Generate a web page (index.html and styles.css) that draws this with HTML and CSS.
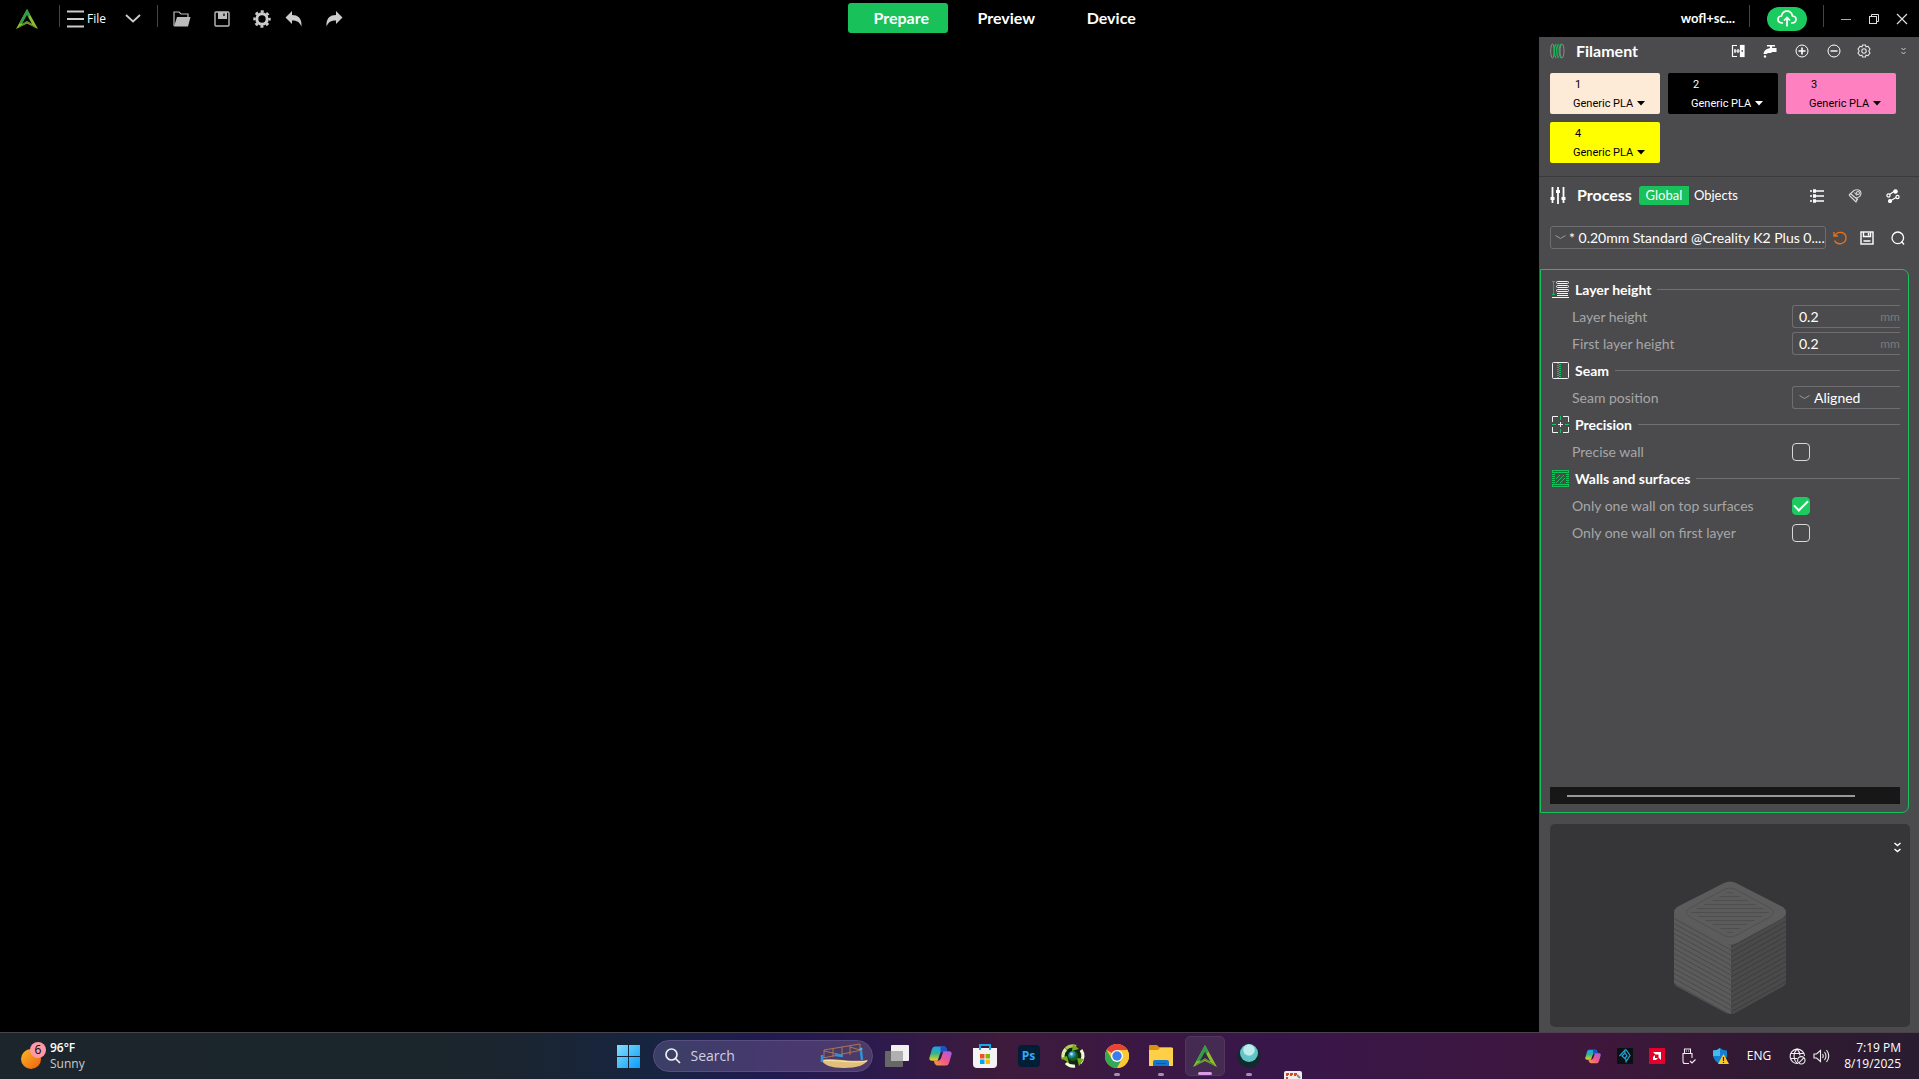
FILE: index.html
```
<!DOCTYPE html>
<html lang="en">
<head>
  <meta charset="UTF-8">
  <title>Creality Print</title>
  <link rel="stylesheet" href="styles.css">
</head>
<body>
  <header class="titlebar">
    <div class="title-left">
      <svg class="logo" width="22" height="20" viewBox="0 0 22 20"><path d="M11 0L22 20L11 14.500L0 20Z" fill="#8fbf2f"/><path d="M11 0L14 6L8 14L3 15Z" fill="#2e9e46"/><path d="M11 6L16 15L11 12L6 15Z" fill="#000"/><path d="M3 18L11 13L19 18" fill="none" stroke="#4a8a28"/></svg>
      <span class="sep"></span>
      <button class="file-btn">
        <svg width="17" height="18" viewBox="0 0 17 18" stroke="#ccc" stroke-width="2"><path d="M0 1.500H17M0 9H17M0 16.500H17"/></svg>
        <span>File</span>
        <svg class="file-arrow" width="16" height="9" viewBox="0 0 16 9" fill="none" stroke="#ccc" stroke-width="1.800"><path d="M1 1L8 7.500L15 1"/></svg>
      </button>
      <span class="sep"></span>
      <div class="tools">
        <button aria-label="Open"><svg width="18" height="16" viewBox="0 0 18 16"><path d="M1 15V1H6L8 3H15V6" fill="none" stroke="#bbb" stroke-width="1.200"/><path d="M4 6H17.500L15 15.500H1Z" fill="#bbb"/></svg></button>
        <button aria-label="Save"><svg width="16" height="16" viewBox="0 0 16 16"><rect x="1" y="1" width="14" height="14" rx="1" fill="none" stroke="#bbb" stroke-width="1.400"/><path d="M4 1H13V8H4Z" fill="#bbb"/><path d="M10 2.500V5" stroke="#222" stroke-width="1.600"/></svg></button>
        <button class="gear" aria-label="Settings"><svg width="18" height="18" viewBox="0 0 18 18"><circle cx="9" cy="9" r="5.200" fill="none" stroke="#ccc" stroke-width="3"/><circle cx="9" cy="9" r="7.500" fill="none" stroke="#ccc" stroke-width="2.400" stroke-dasharray="3 2.890" stroke-dashoffset="1.500"/></svg></button>
        <button aria-label="Undo"><svg width="18" height="18" viewBox="0 0 18 18"><path d="M7 1V5C13 5 17 8 16.500 16.500C14.500 12 12 10.500 7 10.500V14L0.500 7.500Z" fill="#ccc"/></svg></button>
        <button aria-label="Redo"><svg width="18" height="18" viewBox="0 0 18 18"><path d="M11 1V5C5 5 1 8 1.500 16.500C3.500 12 6 10.500 11 10.500V14L17.500 7.500Z" fill="#ccc"/></svg></button>
      </div>
    </div>
    <nav class="tabs">
      <button class="tab active">Prepare</button>
      <button class="tab">Preview</button>
      <button class="tab">Device</button>
    </nav>
    <div class="title-right">
      <button class="account">wofl+sc...</button>
      <span class="sep"></span>
      <button class="cloud" aria-label="Upload"><svg width="20" height="17" viewBox="0 0 20 17" fill="none" stroke="#fff" stroke-width="1.700"><path d="M6 13H5C-0.500 12.500 0 6.500 4.500 6C6 -0.500 14 -0.500 15.500 6C20 6.500 20.500 12.500 15 13H14M10 16.500V8M7 10.500L10 7.500L13 10.500"/></svg></button>
      <span class="sep"></span>
      <div class="window-btns">
        <button aria-label="Minimize"><svg width="12" height="12" viewBox="0 0 12 12" stroke="#aaa"><path d="M1 6.500H11"/></svg></button>
        <button aria-label="Restore"><svg width="12" height="12" viewBox="0 0 12 12" fill="none" stroke="#ddd"><rect x="1.500" y="3.500" width="7" height="7"/><path d="M3.500 3V1.500H10.500V8.500H9"/></svg></button>
        <button aria-label="Close"><svg width="12" height="12" viewBox="0 0 12 12" stroke="#ddd" stroke-width="1.200"><path d="M1 1L11 11M11 1L1 11"/></svg></button>
      </div>
    </div>
  </header>

  <main class="workspace">
    <section class="viewport" aria-label="Build plate"></section>

    <aside class="sidebar">
      <div class="panel-head filament-head">
        <svg width="15" height="16" viewBox="0 0 15 16" fill="none"><g stroke="#8c8c8c"><ellipse cx="2.500" cy="8" rx="1.800" ry="7"/><ellipse cx="12" cy="8" rx="2" ry="7"/></g><path d="M6 1C3.500 4 3.500 12 6 15M8.500 1C6 4 6 12 8.500 15M11 1C8.500 4 8.500 12 11 15" stroke="#17b855" stroke-width="1.300"/></svg>
        <h2>Filament</h2>
        <div class="head-tools">
          <button aria-label="Sync"><svg width="14" height="14" viewBox="0 0 14 14" fill="none" stroke="#fff" stroke-width="1.200"><path d="M6 1.500H1.500V12.500H6M3 7H9M4 5V9M7 5V9"/><rect x="9.500" y="1.500" width="3.500" height="11" fill="#fff"/><path d="M11.200 6V8" stroke="#4b4b4d"/></svg></button>
          <button aria-label="Flush"><svg width="14" height="14" viewBox="0 0 14 14" fill="#fff"><path d="M4 1H12V2.500H9V4H13.500V8H9C8 9.500 7 9 5.500 9C4 9 4 10 3.500 10H0.500C1 7 2.500 5 7 4V2.500H4Z"/><circle cx="2" cy="12.500" r="1.200"/></svg></button>
          <button aria-label="Add"><svg width="14" height="14" viewBox="0 0 14 14" fill="none" stroke="#fff"><circle cx="7" cy="7" r="6"/><path d="M3.500 7H10.500M7 3.500V10.500" stroke-width="1.600"/></svg></button>
          <button aria-label="Remove"><svg width="14" height="14" viewBox="0 0 14 14" fill="none" stroke="#fff"><circle cx="7" cy="7" r="6"/><path d="M3.500 7H10.500" stroke-width="1.400"/></svg></button>
          <button class="narrow" aria-label="Filament settings"><svg width="14" height="14" viewBox="0 0 14 14" fill="none" stroke="#e4e4e4" stroke-width="1.100"><path d="M5.500 1H8.500L9 2.800L11 2.300L13 5L11.800 7L13 9L11 11.700L9 11.200L8.500 13H5.500L5 11.200L3 11.700L1 9L2.200 7L1 5L3 2.300L5 2.800Z"/><circle cx="7" cy="7" r="2.200"/></svg></button>
          <button class="collapse" aria-label="Collapse"><svg width="5" height="8" viewBox="0 0 5 8" fill="none" stroke="#ccc"><path d="M0.500 1L2.500 3L4.500 1M0.500 5L2.500 7L4.500 5"/></svg></button>
        </div>
      </div>

      <div class="filaments">
        <div class="filament peach">
          <label for="filament1">1</label>
          <div class="material"><select id="filament1"><option>Generic PLA</option></select><svg width="8" height="5" viewBox="0 0 8 5"><path d="M0 0H8L4 4.500Z" fill="currentColor"/></svg></div>
        </div>
        <div class="filament black">
          <label for="filament2">2</label>
          <div class="material"><select id="filament2"><option>Generic PLA</option></select><svg width="8" height="5" viewBox="0 0 8 5"><path d="M0 0H8L4 4.500Z" fill="currentColor"/></svg></div>
        </div>
        <div class="filament pink">
          <label for="filament3">3</label>
          <div class="material"><select id="filament3"><option>Generic PLA</option></select><svg width="8" height="5" viewBox="0 0 8 5"><path d="M0 0H8L4 4.500Z" fill="currentColor"/></svg></div>
        </div>
        <div class="filament yellow">
          <label for="filament4">4</label>
          <div class="material"><select id="filament4"><option>Generic PLA</option></select><svg width="8" height="5" viewBox="0 0 8 5"><path d="M0 0H8L4 4.500Z" fill="currentColor"/></svg></div>
        </div>
      </div>

      <div class="panel-head process-head">
        <svg width="16" height="17" viewBox="0 0 16 17" stroke="#fff" stroke-width="1.800"><path d="M2.500 0V16M8 0V17M13.500 0V16"/><path d="M0.500 11.500H4.500M6 4.500H10M11.500 11.500H15.500" stroke-width="3"/></svg>
        <h2>Process</h2>
        <button class="scope active">Global</button>
        <button class="scope">Objects</button>
        <div class="process-tools">
          <button aria-label="Parameter list"><svg width="14" height="14" viewBox="0 0 14 14" stroke="#fff"><path d="M0 2H2M0 7H2M0 12H2M6 2H14M6 7H14M6 12H14" stroke-width="1.400"/><path d="M3 2H6M3 7H6M3 12H6" stroke-width="3.400"/></svg></button>
          <button aria-label="Compare"><svg width="14" height="14" viewBox="0 0 14 14" fill="none" stroke="#d8d8d8" stroke-width="1.100"><path d="M1 6L6 1.500C9 0 13 1 13 4C13 7 11 8.500 8 9L5 7M1 6L8 13L9.500 9M3 5L10 11M6.500 3.500L9 6.500"/><circle cx="10" cy="4" r="1.500"/></svg></button>
          <button aria-label="Flow"><svg width="14" height="14" viewBox="0 0 14 14" fill="none" stroke="#fff" stroke-width="1.200"><path d="M3.500 5.500L8 2.500M5 11.500L10 8.500"/><circle cx="2.500" cy="6.500" r="1.600"/><circle cx="11.500" cy="8" r="1.600"/><circle cx="9.500" cy="2.500" r="1.700" fill="#fff"/><circle cx="4" cy="12" r="1.500" fill="#fff"/></svg></button>
        </div>
      </div>

      <div class="preset-row">
        <div class="preset">
          <svg width="11" height="5" viewBox="0 0 11 5" fill="none" stroke="#999"><path d="M0.500 0.500L5.500 3.500L10.500 0.500"/></svg>
          <select aria-label="Process preset"><option>* 0.20mm Standard @Creality K2 Plus 0....</option></select>
        </div>
        <button aria-label="Reset preset"><svg width="14" height="14" viewBox="0 0 14 14" fill="none" stroke="#f0700f" stroke-width="1.300"><path d="M1 1V5H5M1.500 5C5 -1 13 1 13 7C13 13 4 15 1.500 9.500"/></svg></button>
        <button aria-label="Save preset"><svg width="14" height="14" viewBox="0 0 14 14" fill="none" stroke="#fff" stroke-width="1.400"><rect x="1" y="1" width="12" height="12"/><path d="M3.500 1V5.500H10.500V1M8.500 2V4.500M3.500 10H10.500"/></svg></button>
        <button class="find" aria-label="Search settings"><svg width="14" height="14" viewBox="0 0 14 14" fill="none" stroke="#fff" stroke-width="1.300"><circle cx="6.800" cy="6.800" r="5.800"/><path d="M10.500 10.500L13 13.500"/></svg></button>
      </div>

      <form class="settings">
        <div class="group-title">
          <svg width="17" height="17" viewBox="0 0 17 17" fill="none"><path d="M0 .500H3M1.500 .500V13.500M0 13.500H3" stroke="#17b855"/><g stroke="#f2f2f2"><rect x="4.500" y=".500" width="12" height="2" rx="1"/><rect x="4.500" y="4.500" width="12" height="2" rx="1"/><rect x="4.500" y="8.500" width="12" height="2" rx="1"/><path d="M5 12.500H16M5 14.500H16M0 16.500H17"/></g></svg>
          <h3>Layer height</h3>
        </div>
        <div class="setting">
          <label for="layer-height">Layer height</label>
          <div class="field"><input id="layer-height" type="text" value="0.2"><span class="unit">mm</span></div>
        </div>
        <div class="setting">
          <label for="first-layer">First layer height</label>
          <div class="field"><input id="first-layer" type="text" value="0.2"><span class="unit">mm</span></div>
        </div>
        <div class="group-title">
          <svg width="17" height="17" viewBox="0 0 17 17" fill="none"><rect x=".500" y=".500" width="16" height="16" rx="1" stroke="#f2f2f2"/><path d="M6 1V16M8 2V16" stroke="#17c05a" stroke-width="2" stroke-dasharray="1 1"/></svg>
          <h3>Seam</h3>
        </div>
        <div class="setting">
          <label for="seam">Seam position</label>
          <div class="field"><svg width="11" height="5" viewBox="0 0 11 5" fill="none" stroke="#999"><path d="M0.500 0.500L5.500 3.500L10.500 0.500"/></svg><select id="seam"><option>Aligned</option></select></div>
        </div>
        <div class="group-title">
          <svg width="17" height="17" viewBox="0 0 17 17" fill="none"><path d="M6 .500H.500V6M11 .500H16.500V6M6 16.500H.500V11M11 16.500H16.500V11M8.500 6V11M6 8.500H11" stroke="#f2f2f2"/><path d="M8.500 0V4M8.500 13V17M0 8.500H4M13 8.500H17" stroke="#17c05a"/></svg>
          <h3>Precision</h3>
        </div>
        <div class="setting">
          <label for="precise-wall">Precise wall</label>
          <input id="precise-wall" type="checkbox">
        </div>
        <div class="group-title">
          <svg width="17" height="17" viewBox="0 0 17 17" fill="none" stroke="#17c05a"><rect x=".500" y=".500" width="16" height="2"/><rect x=".500" y="14.500" width="16" height="2"/><path d="M1.500 4V14M15.500 4V14" stroke-width="3" stroke-dasharray="1 1"/><path d="M4 9L8 5M4 13L12 5M8 13L13 8"/></svg>
          <h3>Walls and surfaces</h3>
        </div>
        <div class="setting">
          <label for="wall-top">Only one wall on top surfaces</label>
          <input id="wall-top" type="checkbox" checked>
        </div>
        <div class="setting">
          <label for="wall-first">Only one wall on first layer</label>
          <input id="wall-first" type="checkbox">
        </div>
        <div class="scrollbar"><div class="thumb"></div></div>
      </form>

      <div class="preview">
        <button aria-label="Collapse preview"><svg width="7" height="11" viewBox="0 0 7 11" fill="none" stroke="#fff" stroke-width="1.500"><path d="M0.500 1L3.500 3.500L6.500 1M0.500 7L3.500 9.500L6.500 7"/></svg></button>
        <svg class="cube" width="112" height="133" viewBox="0 0 112 133">
          <defs>
            <pattern id="layers-left" width="4" height="5" patternUnits="userSpaceOnUse" patternTransform="skewY(29)"><rect width="4" height="5" fill="#5b5b5b"/><rect width="4" height="1" y="2" fill="#494949"/></pattern>
            <pattern id="layers-right" width="4" height="5" patternUnits="userSpaceOnUse" patternTransform="skewY(-29)"><rect width="4" height="5" fill="#4a4a4a"/><rect width="4" height="1" y="2" fill="#3c3c3c"/></pattern>
            <pattern id="infill" width="4" height="4" patternUnits="userSpaceOnUse"><rect width="4" height="4" fill="#5b5b5b"/><rect width="4" height="1" y="3" fill="#4e4e4e"/></pattern>
          </defs>
          <path d="M0 30L57 60V133Q53 133 50 131L4 106Q0 104 0 101Z" fill="url(#layers-left)"/>
          <path d="M112 30L57 60V133Q60 133 63 131L108 106Q112 104 112 101Z" fill="url(#layers-right)"/>
          <path d="M50 2Q56 -1 62 2L109 26Q115 31 109 37L63 62Q56 65 49 62L3 37Q-3 31 3 26Z" fill="#5c5c5c"/>
          <path d="M51 8Q56 6 61 8L96 27Q103 31 96 36L61 55Q56 57 51 55L16 36Q9 31 16 27Z" fill="none" stroke="#505050"/>
          <path d="M56 10L96 31L56 53L16 31Z" fill="url(#infill)"/>
        </svg>
      </div>
    </aside>
  </main>

  <footer class="taskbar">
    <button class="weather">
      <svg width="26" height="28" viewBox="0 0 26 28"><defs><linearGradient id="sun" x1="0" y1="0" x2="1" y2="1"><stop offset="0" stop-color="#f7b829"/><stop offset="1" stop-color="#f0600c"/></linearGradient></defs><circle cx="10" cy="17" r="10" fill="url(#sun)"/><circle cx="17" cy="8" r="8" fill="#ff99a4"/><text class="badge-text" x="17" y="12" text-anchor="middle">6</text></svg>
      <span><b>96°F</b><br>Sunny</span>
    </button>

    <nav class="apps">
      <button aria-label="Start"><svg width="23" height="23" viewBox="0 0 23 23"><defs><linearGradient id="win" x1="0" y1="0" x2="1" y2="1"><stop offset="0" stop-color="#84defc"/><stop offset="1" stop-color="#0a9cf8"/></linearGradient></defs><path d="M0 0H11V11H0ZM12 0H23V11H12ZM0 12H11V23H0ZM12 12H23V23H12Z" fill="url(#win)"/></svg></button>
      <label class="search">
        <svg width="16" height="16" viewBox="0 0 16 16" fill="none" stroke="#eee" stroke-width="1.700"><circle cx="6.500" cy="6.500" r="5.500"/><path d="M10.500 10.500L15 15"/></svg>
        <input type="text" placeholder="Search" aria-label="Search">
        <svg width="50" height="26" viewBox="0 0 50 26" fill="none"><path d="M2 17C12 14 35 20 49 17C46 22 38 25 25 25C12 25 5 22 2 17Z" fill="#e2c07a"/><path d="M3 18C14 16 35 21 48 18" stroke="#f8e6b0"/><path d="M5 7L41 1M4 15L43 7M5 7V15M14 5V14M23 4V12M31 3V12M41 1V8M5 8L23 12M31 4L41 7" stroke="#a9784e"/><path d="M16 12L24 13M42 8L43 17M3 12V19" stroke="#2d93d5" stroke-width="2.500"/><circle cx="42" cy="6" r="1.500" fill="#46b4ea"/></svg>
      </label>
      <button aria-label="Task view"><svg width="24" height="22" viewBox="0 0 24 22"><rect y="6" width="18" height="16" rx="1" fill="#676767"/><rect x="6" width="18" height="16" rx="1" fill="#f1f1f1"/><path d="M6 6H18V16H6Z" fill="#b0b0b0"/></svg></button>
      <button aria-label="Copilot"><svg width="23" height="22" viewBox="0 0 24 22"><defs><linearGradient id="cop1" x1="0" y1="0" x2="0" y2="1"><stop offset="0" stop-color="#1d9ff0"/><stop offset=".5" stop-color="#35b58a"/><stop offset="1" stop-color="#f6d21a"/></linearGradient><linearGradient id="cop2" x1="1" y1="0" x2="0" y2="1"><stop offset="0" stop-color="#a25cf0"/><stop offset=".5" stop-color="#f0568a"/><stop offset="1" stop-color="#fa9a3c"/></linearGradient></defs><path d="M6 1H16Q18 1 19 6H15Q12 6 11 10L9 16H3Q-1 16 1 11L3 4Q4 1 6 1Z" fill="url(#cop1)"/><path d="M12 1H16Q18 1 19 6H15Q13 6 12 8Z" fill="#1c4fd0"/><path d="M18 21H9Q6 21 5 16H9Q12 16 13 12L15 6H21Q25 6 23 11L21 18Q20 21 18 21Z" fill="url(#cop2)"/></svg></button>
      <button aria-label="Microsoft Store"><svg width="24" height="24" viewBox="0 0 24 24"><path d="M7 6V1H17V6" fill="none" stroke="#1aa6e8" stroke-width="2"/><path d="M0 4H24V20Q24 24 20 24H4Q0 24 0 20Z" fill="#f3f3f3"/><path d="M6 1H8V6H6ZM16 1H18V6H16Z" fill="#1aa6e8"/><path d="M7 10H11.500V14.500H7Z" fill="#f05022"/><path d="M12.500 10H17V14.500H12.500Z" fill="#7fba00"/><path d="M7 15.500H11.500V20H7Z" fill="#01a4ef"/><path d="M12.500 15.500H17V20H12.500Z" fill="#ffb901"/></svg></button>
      <button aria-label="Photoshop"><span class="ps">Ps</span></button>
      <button aria-label="Updater"><svg width="24" height="24" viewBox="0 0 24 24"><defs><radialGradient id="orb" cx=".35" cy=".3"><stop offset="0" stop-color="#e8ffff"/><stop offset=".4" stop-color="#28a0d8"/><stop offset="1" stop-color="#155f18"/></radialGradient></defs><circle cx="12" cy="12" r="10" fill="#152416"/><g fill="none" stroke-width="3.200"><path d="M5 4.500A10 10 0 0 1 15 2.500" stroke="#a8d050"/><path d="M20 6A10 10 0 0 1 19 19" stroke="#f0f8d0"/><path d="M14 22A10 10 0 0 1 5 19" stroke="#f4ffd9"/><path d="M2.500 15A10 10 0 0 1 5 5" stroke="#d8efa0"/></g><path d="M12 0L18 5L11 7ZM23 15L16 14L18 22ZM0 14L6 12L8 19Z" fill="#72ad18"/><circle cx="12" cy="12" r="5" fill="url(#orb)"/></svg></button>
      <button class="running" aria-label="Chrome"><svg width="24" height="24" viewBox="0 0 24 24"><circle cx="12" cy="12" r="12" fill="#fcc934"/><path d="M12 12L1.600 6A12 12 0 0 1 22.400 6H12Z" fill="#ea4335"/><path d="M1.600 6A12 12 0 0 0 12 24L17.200 15L6.800 15Z" fill="#34a853"/><path d="M12 6H22.400A12 12 0 0 1 12 24L17.200 15Z" fill="#fcc934"/><circle cx="12" cy="12" r="6" fill="#fff"/><circle cx="12" cy="12" r="4.700" fill="#3b7ded"/></svg></button>
      <button class="running" aria-label="File Explorer"><svg width="24" height="22" viewBox="0 0 24 22"><path d="M0 1Q0 0 1 0H8L10 2H22Q24 2 24 4V8H0Z" fill="#d9930a"/><path d="M0 5H9L11 3H24V21H0Z" fill="#ffcf48"/><path d="M4 21V17Q4 15 6 15H18Q20 15 20 17V21Z" fill="#1676c8"/><path d="M7 18.500H17" stroke="#0d5aa0"/></svg></button>
      <button class="running current" aria-label="Creality Print"><svg width="24" height="22" viewBox="0 0 22 20"><path d="M11 0L22 20L11 14.500L0 20Z" fill="#8fbf2f"/><path d="M11 0L14 6L8 14L3 15Z" fill="#2e9e46"/><path d="M11 6L16 15L11 12L6 15Z" fill="#40204a"/><path d="M3 18L11 13L19 18" fill="none" stroke="#4a8a28"/></svg></button>
      <button class="running" aria-label="Assistant"><svg width="24" height="24" viewBox="0 0 24 24"><circle cx="12" cy="12.500" r="11.500" fill="#12292e"/><circle cx="12" cy="9" r="9" fill="#62c4c8"/><circle cx="12" cy="6" r="5.800" fill="#bdecea"/></svg></button>
      <button class="rising" aria-label="Snipping tool"><svg width="18" height="18" viewBox="0 0 18 18"><rect width="18" height="18" rx="2" fill="#eee"/><path d="M2 3H14M3 2V8M7 2V6M11 2V6" stroke="#d24726" stroke-width="2" stroke-dasharray="3 1"/><path d="M13 4L16 7" stroke="#888" stroke-width="2"/></svg></button>
    </nav>

    <div class="tray">
      <button aria-label="Copilot"><svg width="16" height="15" viewBox="0 0 24 22"><path d="M6 1H16Q18 1 19 6H15Q12 6 11 10L9 16H3Q-1 16 1 11L3 4Q4 1 6 1Z" fill="url(#cop1)"/><path d="M12 1H16Q18 1 19 6H15Q13 6 12 8Z" fill="#1c4fd0"/><path d="M18 21H9Q6 21 5 16H9Q12 16 13 12L15 6H21Q25 6 23 11L21 18Q20 21 18 21Z" fill="url(#cop2)"/></svg></button>
      <button aria-label="Control center"><svg width="16" height="16" viewBox="0 0 16 16"><rect width="16" height="16" fill="#0b1014"/><path d="M2.500 8L8 2V5L5 8L9 11.500V14.500M9 1.500L13 7.500L9.500 13M8 5L10 8L8 10" fill="none" stroke="#20a4d0" stroke-width="1.200"/></svg></button>
      <button aria-label="AMD Software"><svg width="16" height="16" viewBox="0 0 16 16"><rect width="16" height="16" fill="#e4002b"/><path d="M4 4H12V12L9.500 9.500V6.500H6.500ZM4 9L6 7V10H9L7 12H4Z" fill="#fff"/></svg></button>
      <button aria-label="Safely remove hardware"><svg width="14" height="17" viewBox="0 0 14 17" fill="none" stroke="#eee" stroke-width="1.100"><path d="M2.500 5V1H8.500V5M7 15.500H3Q1 15.500 1 13.500V5.500H10V10M4 3H5M6 3H7M8 13L10 15L13.500 11.500"/></svg></button>
      <button aria-label="Windows Security"><svg width="16" height="17" viewBox="0 0 16 17"><path d="M7 0Q10 2.500 14 2.500V8Q13 13 7 16Q1 13 0 8V2.500Q4 2.500 7 0Z" fill="#1680d0"/><path d="M7 0Q4 2.500 0 2.500V8H7Z" fill="#46b9f0"/><path d="M10.500 6L16 16H5Z" fill="#ffc91e"/><path d="M10.500 9V13M10.500 14V15" stroke="#222" stroke-width="1.200"/></svg></button>
      <button class="lang">ENG</button>
      <button class="network" aria-label="Network and volume">
        <svg width="17" height="17" viewBox="0 0 17 17" fill="none" stroke="#eee" stroke-width="1.100"><path d="M9 15.500A7.200 7.200 0 1 1 15.500 8M1.500 5.500H15M1.500 10.500H8M8 1C4 5 4 11 8 15.500M8 1C10 3 11 5 11 7.500"/><circle cx="12.300" cy="12.300" r="3.700"/><path d="M9.800 14.800L14.800 9.800"/></svg>
        <svg width="17" height="14" viewBox="0 0 17 14" fill="none" stroke="#eee" stroke-width="1.100"><path d="M1 5H3.500L7.500 1.500V12.500L3.500 9H1ZM9.500 5Q11 7 9.500 9M11.500 3Q14.500 7 11.500 11M13.500 1Q18 7 13.500 13"/></svg>
      </button>
      <button class="clock">7:19 PM<br>8/19/2025</button>
    </div>
  </footer>
</body>
</html>
```
FILE: styles.css
```
* {
  box-sizing: border-box;
}
body {
  margin: 0;
  height: 100vh;
  display: flex;
  flex-direction: column;
  overflow: hidden;
  background-color: #000;
  color: #fff;
  font-family: Lato, sans-serif;
  font-size: 14px;
}
button {
  display: flex;
  align-items: center;
  justify-content: center;
  padding: 0;
  border: none;
  background: none;
  color: inherit;
  font: inherit;
  cursor: pointer;
}
select,
input {
  appearance: none;
  margin: 0;
  padding: 0;
  border: none;
  outline: none;
  background: none;
  color: inherit;
  font: inherit;
}
svg {
  flex: none;
}
h2,
h3 {
  margin: 0;
}

/* title bar */
.titlebar {
  display: grid;
  grid-template-columns: 1.115fr auto 1fr;
  height: 37px;
  flex: none;
}
.title-left,
.title-right,
.tabs,
.tools,
.window-btns {
  display: flex;
  align-items: center;
}
.title-left {
  padding-left: 16px;
}
.sep {
  width: 1px;
  height: 22px;
  margin-bottom: 5px;
  background-color: #444;
}
.title-left .sep {
  margin-left: 21px;
}
.file-btn {
  margin-left: 7px;
  gap: 3px;
  font: 12px "Open Sans", sans-serif;
}
.file-arrow {
  margin-left: 16px;
}
.title-left .file-btn + .sep {
  margin-left: 16px;
}
.tools {
  margin-left: 4px;
}
.tools button {
  width: 40px;
  height: 32px;
}
.tools .gear {
  margin-right: -8px;
}
.tabs {
  gap: 5px;
  align-items: flex-start;
  padding-top: 3px;
}
.tab {
  width: 100px;
  height: 30px;
  padding: 0 0 2px 6px;
  border-radius: 3px;
  font-size: 16px;
  font-weight: bold;
}
.tab.active {
  background-color: #19c15b;
}
.title-right {
  justify-content: flex-end;
  padding-right: 3px;
}
.account {
  margin-right: 14px;
  padding-bottom: 2px;
  font-size: 13px;
  font-weight: bold;
}
.cloud {
  width: 40px;
  height: 24px;
  margin: 0 16px 0 17px;
  border-radius: 12px;
  background-color: #1bcb5f;
}
.window-btns {
  margin-left: 8px;
}
.window-btns button {
  width: 28px;
  height: 30px;
}

/* workspace */
.workspace {
  flex: 1;
  display: flex;
  min-height: 0;
}
.viewport {
  flex: 1;
}
.sidebar {
  width: 380px;
  display: flex;
  flex-direction: column;
  background-color: #4b4b4d;
}
.panel-head {
  display: flex;
  align-items: center;
  padding-left: 11px;
}
.panel-head h2 {
  padding-bottom: 2px;
  font-size: 16px;
}
.filament-head {
  height: 28px;
  gap: 11px;
}
.head-tools {
  display: flex;
  margin-left: auto;
}
.head-tools button {
  width: 32px;
}
.head-tools .narrow {
  width: 28px;
}
.head-tools .collapse {
  width: 50px;
  margin-right: -9px;
}
.filaments {
  display: flex;
  flex-wrap: wrap;
  gap: 8px;
  padding: 8px 11px 13px;
  border-bottom: 1px solid #3a3a3c;
}
.filament {
  width: 110px;
  height: 41px;
  padding: 2px 0 0 23px;
  border-radius: 2px;
  font: 11px/19px Roboto, sans-serif;
}
.filament label {
  display: block;
  padding-left: 2px;
}
.material {
  display: flex;
  align-items: center;
  gap: 3px;
}
.peach {
  background-color: #fdebd7;
  color: #000;
}
.black {
  background-color: #000;
}
.pink {
  background-color: #ff80c0;
  color: #000;
}
.yellow {
  background-color: #ff0;
  color: #000;
}
.process-head {
  height: 37px;
}
.process-head h2 {
  margin: 0 7px 0 11px;
}
.scope {
  height: 19px;
  padding: 0 5px 1px;
  font-size: 13px;
}
.scope.active {
  width: 50px;
  border-radius: 3px 0 0 3px;
  background-color: #19c15b;
}
.process-tools {
  display: flex;
  margin-left: auto;
  padding-right: 7px;
}
.process-tools button {
  width: 38px;
}
.preset-row {
  display: flex;
  align-items: center;
  padding: 12px 14px 20px 11px;
}
.preset-row button {
  width: 28px;
  margin-right: -1px;
}
.preset-row .find {
  width: 36px;
  margin-right: -11px;
}
.preset {
  flex: 1;
  display: flex;
  align-items: center;
  gap: 3px;
  min-width: 0;
  height: 23px;
  padding: 0 0 1px 4px;
  border: 1px solid #6e6e70;
  border-radius: 3px;
}
.preset select {
  flex: 1;
  min-width: 0;
}

/* settings */
.settings {
  flex: 1;
  display: flex;
  flex-direction: column;
  margin: 0 10px 0 1px;
  padding: 6px 8px 8px 9px;
  border: 1px solid #19c15b;
  border-radius: 0 7px 7px 0;
}
.group-title,
.setting {
  display: flex;
  align-items: center;
  height: 27px;
}
.group-title {
  gap: 6px;
  padding-left: 2px;
}
.group-title h3 {
  padding-bottom: 1px;
  font-size: 14px;
}
.group-title::after {
  content: "";
  flex: 1;
  height: 1px;
  background-color: #707072;
}
.setting {
  padding-left: 22px;
}
.setting label {
  flex: 1;
  color: #a6a6a8;
}
.field {
  display: flex;
  align-items: center;
  gap: 4px;
  width: 108px;
  height: 23px;
  padding-left: 6px;
  border: 1px solid #6e6e70;
  border-right: none;
  border-radius: 3px 0 0 3px;
}
.field input {
  flex: 1;
  min-width: 0;
}
.unit {
  color: #7a7a7c;
  font-size: 12px;
}
.setting input[type="checkbox"] {
  width: 18px;
  height: 18px;
  margin-right: 90px;
  border: 1px solid #d8d8d8;
  border-radius: 4px;
}
.setting input[type="checkbox"]:checked {
  display: grid;
  place-items: center;
  border-color: #1bcb5f;
  background-color: #1bcb5f;
}
.setting input[type="checkbox"]:checked::before {
  content: "";
  width: 12px;
  height: 6px;
  margin-bottom: 3px;
  border-left: 2px solid #fff;
  border-bottom: 2px solid #fff;
  transform: rotate(-45deg);
}
.scrollbar {
  height: 17px;
  margin-top: auto;
  padding: 8px 45px 0 17px;
  background-color: #171717;
}
.thumb {
  height: 2px;
  background-color: #999;
}
.preview {
  display: flex;
  flex-direction: column;
  align-items: center;
  height: 203px;
  margin: 11px 9px 5px 11px;
  padding: 18px 9px 0;
  border-radius: 5px;
  background-color: #363638;
}
.preview button {
  align-self: flex-end;
}
.cube {
  margin-top: 28px;
}

/* taskbar */
.taskbar {
  flex: none;
  display: grid;
  grid-template-columns: 1fr auto 1fr;
  height: 47px;
  border-top: 1px solid #4a434e;
  background: linear-gradient(90deg, #1b252b 0%, #1b252d 25%, #172440 34%, #211a50 40%, #2e1a4c 46%, #3e1a3c 52%, #38164a 66%, #3e173c 83%, #2f1a31 93%, #2a1c30 100%);
  font: 12px/16px "Open Sans", sans-serif;
  overflow: hidden;
}
.weather {
  justify-self: start;
  gap: 3px;
  padding-left: 21px;
  text-align: left;
  color: #ccc;
}
.weather b {
  font-weight: 600;
  color: #fff;
}
.badge-text {
  font-size: 12px;
}
.apps,
.tray {
  display: flex;
  align-items: center;
}
.apps {
  padding-left: 2px;
}
.apps button {
  width: 44px;
  height: 46px;
  border: 2px solid transparent;
}
.search {
  display: flex;
  align-items: center;
  gap: 10px;
  width: 220px;
  height: 32px;
  margin: 0 2px;
  padding: 0 3px 0 11px;
  border: 1px solid #5a4d82;
  border-radius: 16px;
  background: linear-gradient(90deg, #3a3f66, #48386f 60%, #4d3a68);
}
.search input {
  flex: 1;
  min-width: 0;
  font-size: 14px;
}
.search input::placeholder {
  color: #d2cfe0;
}
.ps {
  width: 22px;
  height: 22px;
  border-radius: 4px;
  background-color: #001e36;
  color: #31a8ff;
  font: bold 12px/21px "Open Sans", sans-serif;
}
.running {
  position: relative;
}
.running::after {
  content: "";
  position: absolute;
  left: 17px;
  bottom: 1px;
  width: 6px;
  height: 3px;
  border-radius: 2px;
  background-color: #a58fb0;
}
.apps .current {
  width: 40px;
  height: 40px;
  margin: 0 2px;
  border: 1px solid #51365f;
  border-radius: 5px;
  background-color: #452a52;
}
.current::after {
  left: 12px;
  bottom: 0;
  width: 14px;
  background-color: #d79ce4;
}
.apps .rising {
  align-items: flex-start;
  padding-top: 36px;
}
.tray {
  justify-content: flex-end;
  padding-right: 18px;
}
.tray button {
  width: 32px;
  height: 40px;
}
.tray .lang {
  width: 44px;
}
.tray .network {
  width: 56px;
  gap: 7px;
}
.tray .clock {
  width: 64px;
  justify-content: flex-end;
  text-align: right;
}
```
